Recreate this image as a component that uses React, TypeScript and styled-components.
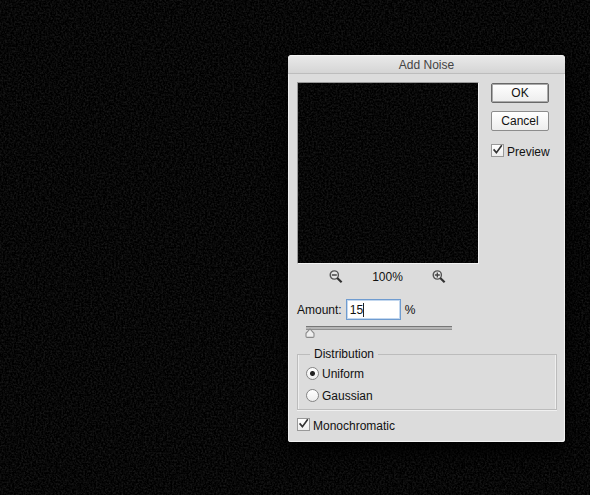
import React, { useState } from "react";
import styled, { createGlobalStyle, css } from "styled-components";

const GlobalStyle = createGlobalStyle`
  *, *::before, *::after { box-sizing: border-box; }
  body {
    margin: 0;
    background: #060606;
    color: #111;
    font: 12px/16px "Liberation Sans", Arial, Helvetica, sans-serif;
  }
`;

const svgUrl = (markup: string) => `url("data:image/svg+xml,${encodeURIComponent(markup)}")`;

const checkMark = svgUrl(
  '<svg xmlns="http://www.w3.org/2000/svg" viewBox="0 0 13 13"><path d="M2.6 5.4 5.4 8.6 10.8 1.2" fill="none" stroke="#333" stroke-width="1.6"/></svg>'
);
const sliderThumb = svgUrl(
  '<svg xmlns="http://www.w3.org/2000/svg" viewBox="0 0 10 10"><path d="M5 1 9 5.3V8.3Q9 9.4 7.9 9.4H2.1Q1 9.4 1 8.3V5.3Z" fill="#eee" stroke="#8a8a8a" stroke-width="1.1"/></svg>'
);

const Desktop = styled.main`
  position: relative;
  display: flex;
  justify-content: flex-end;
  align-items: flex-start;
  min-height: 100vh;
  padding: 55px 25px 52px;
`;

const Grain = styled.svg`
  position: absolute;
  inset: 0;
  width: 100%;
  height: 100%;
`;

const Dialog = styled.form`
  position: relative;
  flex: 0 1 277px;
  border-radius: 4px 4px 3px 3px;
  background: #dcdcdc;
  box-shadow: inset 1px 0 #eee, inset -1px -1px #f2f2f2, 0 8px 20px #000;
  overflow: hidden;
`;

const TitleBar = styled.h1`
  margin: 0;
  height: 19px;
  border-top: 1px solid #f5f5f5;
  border-bottom: 1px solid #bdbdbd;
  background: linear-gradient(#e9e9e9, #d5d5d5);
  color: #444;
  font-size: 12px;
  font-weight: 400;
  line-height: 18px;
  text-align: center;
`;

const Content = styled.div`
  padding: 8px 8px 8px 9px;
`;

const Top = styled.div`
  display: flex;
  gap: 12px;
`;

const PreviewColumn = styled.div`
  flex: 0 1 182px;
`;

const PreviewPane = styled.div`
  position: relative;
  aspect-ratio: 1;
  background: #060606;
  border: 1px solid #f4f4f4;
  border-left-color: #999;
  border-top-color: #999;
`;

const ZoomBar = styled.div`
  display: flex;
  align-items: center;
  justify-content: space-between;
  padding: 5px 33px 0 32px;
`;

const IconButton = styled.button`
  display: flex;
  padding: 0;
  border: 0;
  background: none;
`;

const Actions = styled.div`
  display: flex;
  flex-direction: column;
  align-items: flex-start;
  gap: 8px;
  padding-top: 1px;
`;

const PushButton = styled.button<{ $primary?: boolean }>`
  width: 58px;
  height: 20px;
  padding: 0;
  border: 1px solid #8c8c8c;
  border-radius: 2px;
  background: linear-gradient(#fff, #ededed);
  color: #111;
  font: inherit;
  line-height: 18px;
  ${(p) =>
    p.$primary &&
    css`
      border-color: #686868;
      box-shadow: inset 0 0 0 1px #aaa;
    `}
`;

const Choice = styled.label`
  display: flex;
  align-items: center;
  gap: 3px;
  height: 16px;
`;

const PreviewChoice = styled(Choice)`
  margin-top: 5px;
`;

const Tick = styled.input.attrs({ type: "checkbox" })`
  appearance: none;
  width: 13px;
  height: 13px;
  margin: 0 0 3px;
  border: 1px solid #999;
  background: linear-gradient(#fff, #ededed);
  &:checked {
    background: ${checkMark} center / 13px 13px no-repeat, linear-gradient(#fff, #ededed);
  }
`;

const Radio = styled.input.attrs({ type: "radio" })`
  appearance: none;
  width: 13px;
  height: 13px;
  margin: 0 0 2px;
  border: 1px solid #858585;
  border-radius: 50%;
  background: linear-gradient(#fff, #ededed);
  &:checked {
    background: radial-gradient(circle, #222 0 2px, transparent 3px), linear-gradient(#fff, #ededed);
  }
`;

const AmountRow = styled.div`
  display: flex;
  align-items: center;
  gap: 4px;
  margin-top: 14px;
`;

const Field = styled.span`
  position: relative;
  display: flex;
`;

const AmountInput = styled.input`
  width: 55px;
  height: 21px;
  padding: 1px 3px 0;
  border: 1px solid #6f9cd0;
  outline: 0;
  box-shadow: inset 0 0 0 1px #c3d7ee;
  background: #fff;
  color: #111;
  font: inherit;
  caret-color: transparent;
`;

const Caret = styled.span`
  position: absolute;
  left: 17px;
  top: 4px;
  width: 1px;
  height: 14px;
  background: #222;
`;

const Slider = styled.input.attrs({ type: "range" })`
  appearance: none;
  display: block;
  width: 147px;
  height: 13px;
  margin: 5px 0 0 8px;
  background: none;
  &::-webkit-slider-runnable-track {
    height: 13px;
    background: linear-gradient(#777 0 1px, #b5b5b5 1px 3px, #909090 3px 4px, transparent 4px) 1px 1px no-repeat;
  }
  &::-webkit-slider-thumb {
    appearance: none;
    width: 10px;
    height: 10px;
    margin-top: 3px;
    background: ${sliderThumb} center / 10px 10px no-repeat;
  }
`;

const Group = styled.fieldset`
  display: flex;
  flex-direction: column;
  gap: 6px;
  min-width: 0;
  margin: 8px 0;
  padding: 4px 8px 5px;
  border: 1px solid #bcbcbc;
  box-shadow: inset -1px 0 #eee, inset 1px 0 #eee, 0 1px #f0f0f0;
`;

const Legend = styled.legend`
  margin-left: 4px;
  padding: 0 4px;
`;

const Noise = ({ seed }: { seed: number }) => (
  <Grain aria-hidden="true">
    <filter id={`grain-${seed}`} x="0" y="0" width="100%" height="100%" colorInterpolationFilters="sRGB">
      <feTurbulence type="fractalNoise" baseFrequency="0.55" numOctaves="2" seed={seed} />
      <feColorMatrix values="0.2 0 0 0 -0.07  0.2 0 0 0 -0.07  0.2 0 0 0 -0.07  0 0 0 0 1" />
    </filter>
    <rect width="100%" height="100%" filter={`url(#grain-${seed})`} />
  </Grain>
);

const Magnifier = ({ plus }: { plus?: boolean }) => (
  <svg width="14" height="14" viewBox="0 0 14 14" fill="none" aria-hidden="true">
    <circle cx="5.3" cy="5" r="4.1" fill="#e5e5e5" stroke="#555" strokeWidth="1.4" />
    <path d={plus ? "M2.8 5H7.8M5.3 2.5V7.5" : "M2.8 5H7.8"} stroke="#444" strokeWidth="1.3" />
    <path d="M8.2 8 12.6 12.2" stroke="#333" strokeWidth="2.2" />
  </svg>
);

export default function App() {
  const [amount, setAmount] = useState("15");
  const [distribution, setDistribution] = useState("Uniform");

  return (
    <>
      <GlobalStyle />
      <Desktop>
        <Noise seed={3} />
        <Dialog aria-labelledby="title" onSubmit={(e) => e.preventDefault()}>
          <TitleBar id="title">Add Noise</TitleBar>
          <Content>
            <Top>
              <PreviewColumn>
                <PreviewPane>
                  <Noise seed={8} />
                </PreviewPane>
                <ZoomBar>
                  <IconButton type="button" aria-label="Zoom out"><Magnifier /></IconButton>
                  <span>100%</span>
                  <IconButton type="button" aria-label="Zoom in"><Magnifier plus /></IconButton>
                </ZoomBar>
              </PreviewColumn>
              <Actions>
                <PushButton type="submit" $primary>OK</PushButton>
                <PushButton type="button">Cancel</PushButton>
                <PreviewChoice>
                  <Tick defaultChecked />
                  Preview
                </PreviewChoice>
              </Actions>
            </Top>
            <AmountRow>
              <label htmlFor="amount">Amount:</label>
              <Field>
                <AmountInput id="amount" value={amount} onChange={(e) => setAmount(e.target.value)} />
                <Caret />
              </Field>
              <span>%</span>
            </AmountRow>
            <Slider
              aria-label="Amount"
              min={15}
              max={400}
              value={Number(amount) || 0}
              onChange={(e) => setAmount(e.target.value)}
            />
            <Group>
              <Legend>Distribution</Legend>
              {["Uniform", "Gaussian"].map((name) => (
                <Choice key={name}>
                  <Radio
                    name="distribution"
                    value={name}
                    checked={distribution === name}
                    onChange={() => setDistribution(name)}
                  />
                  {name}
                </Choice>
              ))}
            </Group>
            <Choice>
              <Tick defaultChecked />
              Monochromatic
            </Choice>
          </Content>
        </Dialog>
      </Desktop>
    </>
  );
}
